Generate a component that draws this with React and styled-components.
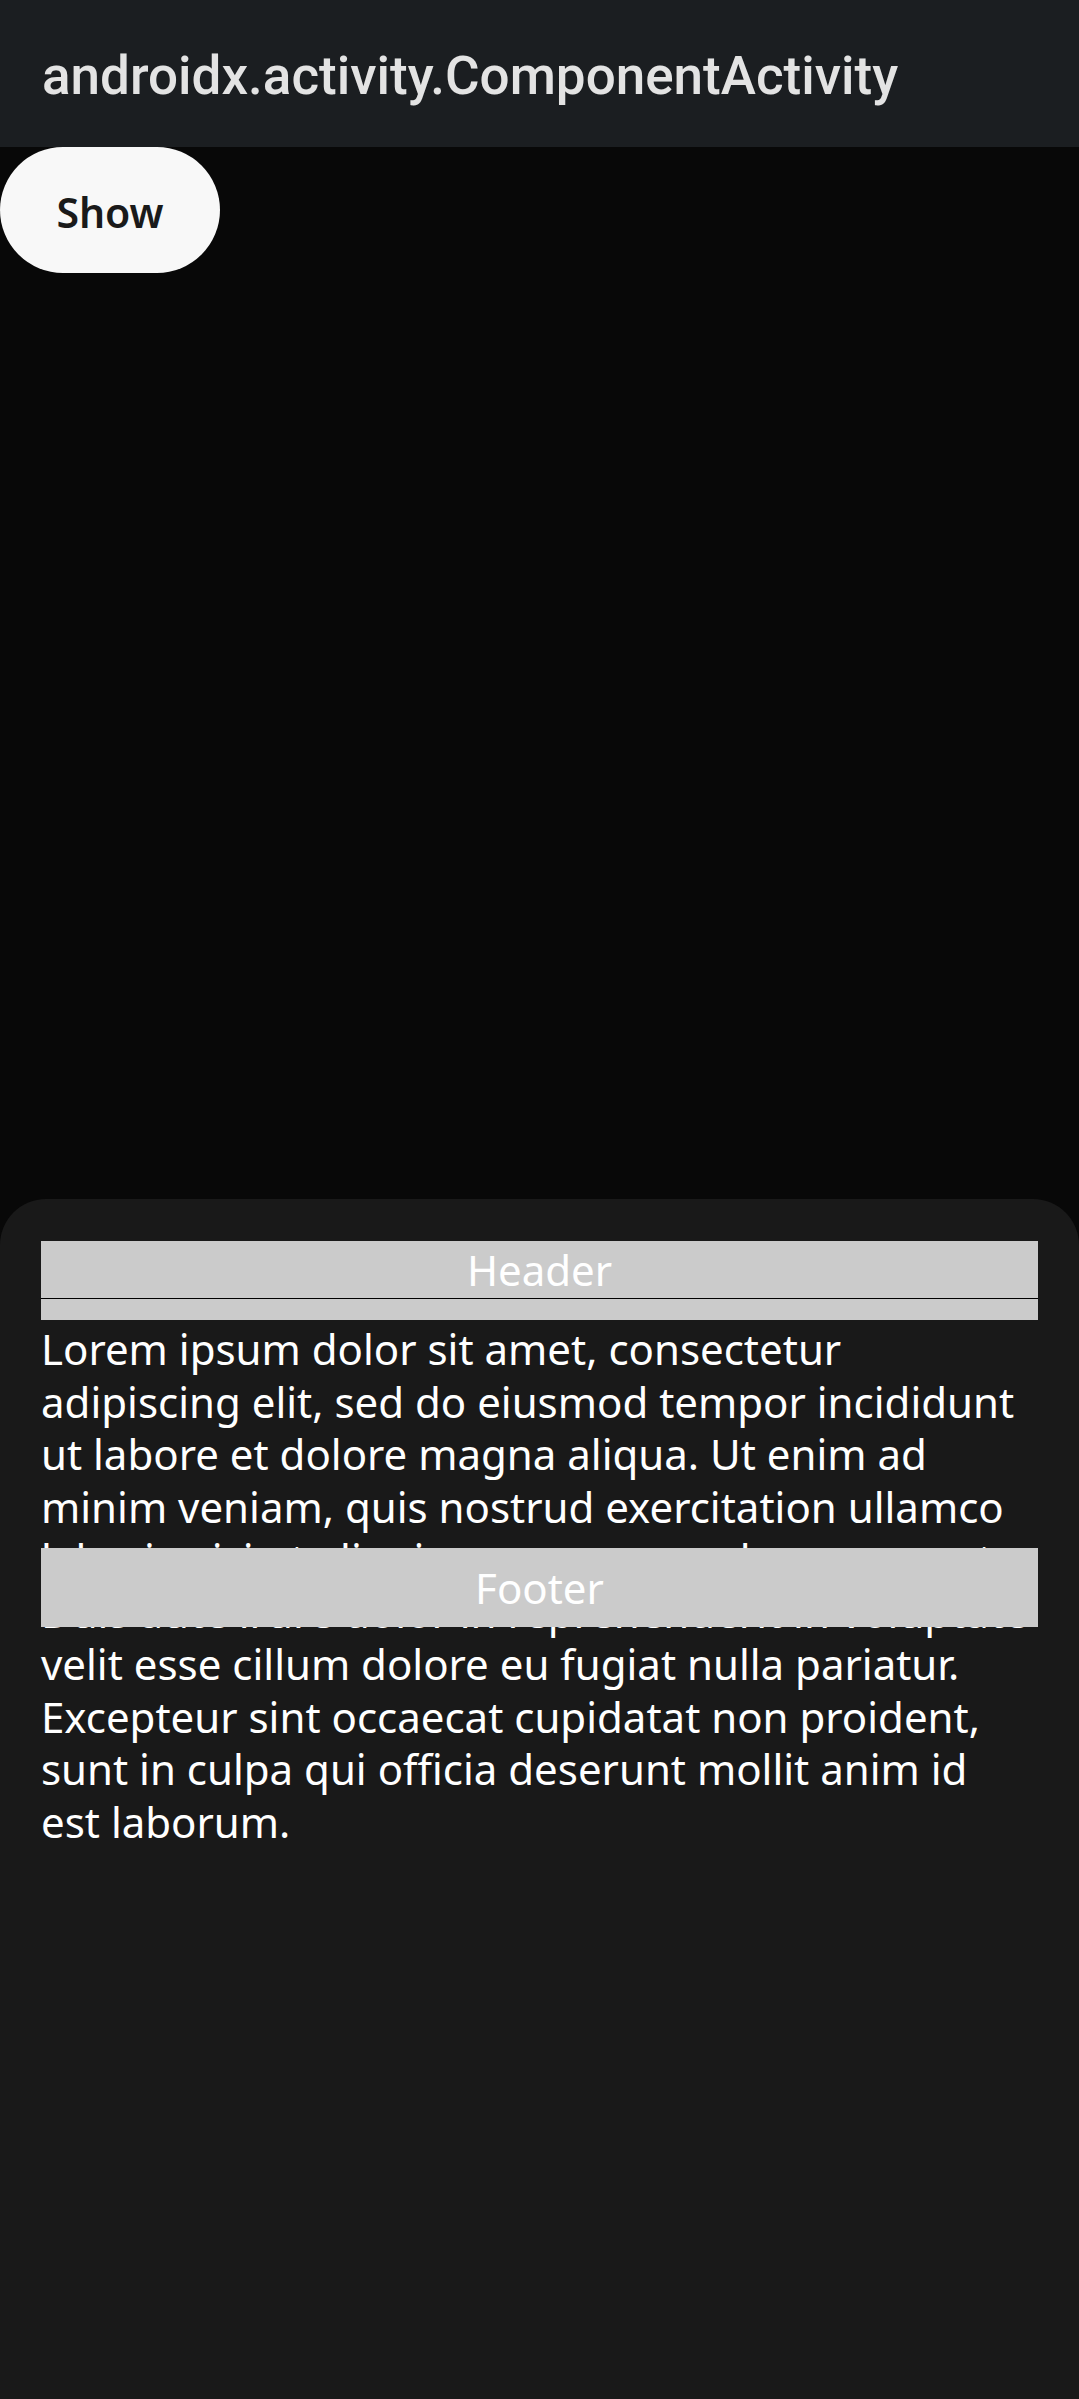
import React from 'react'
import styled, { createGlobalStyle } from 'styled-components'

const GlobalStyle = createGlobalStyle`
  html, body {
    margin: 0;
    padding: 0;
    background: #080808;
  }
  * {
    box-sizing: border-box;
  }
`

const LOREM =
  'Lorem ipsum dolor sit amet, consectetur adipiscing elit, sed do eiusmod tempor incididunt ut labore et dolore magna aliqua. Ut enim ad minim veniam, quis nostrud exercitation ullamco laboris nisi ut aliquip ex ea commodo consequat. Duis aute irure dolor in reprehenderit in voluptate velit esse cillum dolore eu fugiat nulla pariatur. Excepteur sint occaecat cupidatat non proident, sunt in culpa qui officia deserunt mollit anim id est laborum.'

function App() {
  return (
    <Screen>
      <GlobalStyle />
      <AppBar>
        <Title>androidx.activity.ComponentActivity</Title>
      </AppBar>
      <Content>
        <PillButton type="button">Show</PillButton>
      </Content>
      <Sheet>
        <SheetHeader>
          <BarLabel>Header</BarLabel>
          <Divider />
        </SheetHeader>
        <Body>{LOREM}</Body>
        <SheetFooter>
          <BarLabel>Footer</BarLabel>
        </SheetFooter>
      </Sheet>
    </Screen>
  )
}

const Screen = styled.div`
  height: 2399px;
  display: flex;
  flex-direction: column;
  background: #080808;
  overflow: hidden;
`

const AppBar = styled.header`
  height: 147px;
  flex-shrink: 0;
  display: flex;
  align-items: center;
  padding: 4px 42px 0;
  background: #1b1e21;
`

const Title = styled.h1`
  margin: 0;
  font-family: Roboto, 'Liberation Sans', sans-serif;
  font-weight: 500;
  font-size: 53px;
  color: #e3e3e3;
  white-space: nowrap;
`

const Content = styled.main`
  flex: 1;
  display: flex;
  align-items: flex-start;
`

const PillButton = styled.button`
  width: 220px;
  height: 126px;
  border: none;
  border-radius: 63px;
  background: #f8f8f8;
  color: #1a1a1a;
  font-family: 'Noto Sans', 'Open Sans', sans-serif;
  font-weight: 600;
  font-size: 41px;
  padding: 0;
  padding-top: 4px;
  cursor: pointer;
`

const Sheet = styled.section`
  position: relative;
  height: 1200px;
  flex-shrink: 0;
  padding: 42px 41px 0;
  background: #191919;
  border-radius: 46px 46px 0 0;
`

const SheetHeader = styled.div`
  display: flex;
  flex-direction: column;
  background: #cbcbcb;
  padding-bottom: 21px;
`

const BarLabel = styled.div`
  font-family: 'Noto Sans', 'Open Sans', sans-serif;
  font-size: 42px;
  line-height: 57px;
  color: #ffffff;
  text-align: center;
`

const Divider = styled.div`
  height: 1px;
  background: #000000;
`

const Body = styled.p`
  margin: 0 8px 0 0;
  padding-top: 3px;
  font-family: 'Noto Sans', 'Open Sans', sans-serif;
  font-size: 42px;
  line-height: 52.5px;
  color: #ffffff;
`

const SheetFooter = styled.div`
  position: absolute;
  top: 349px;
  left: 41px;
  right: 41px;
  padding: 11px 0;
  background: #cbcbcb;
`

export default App
